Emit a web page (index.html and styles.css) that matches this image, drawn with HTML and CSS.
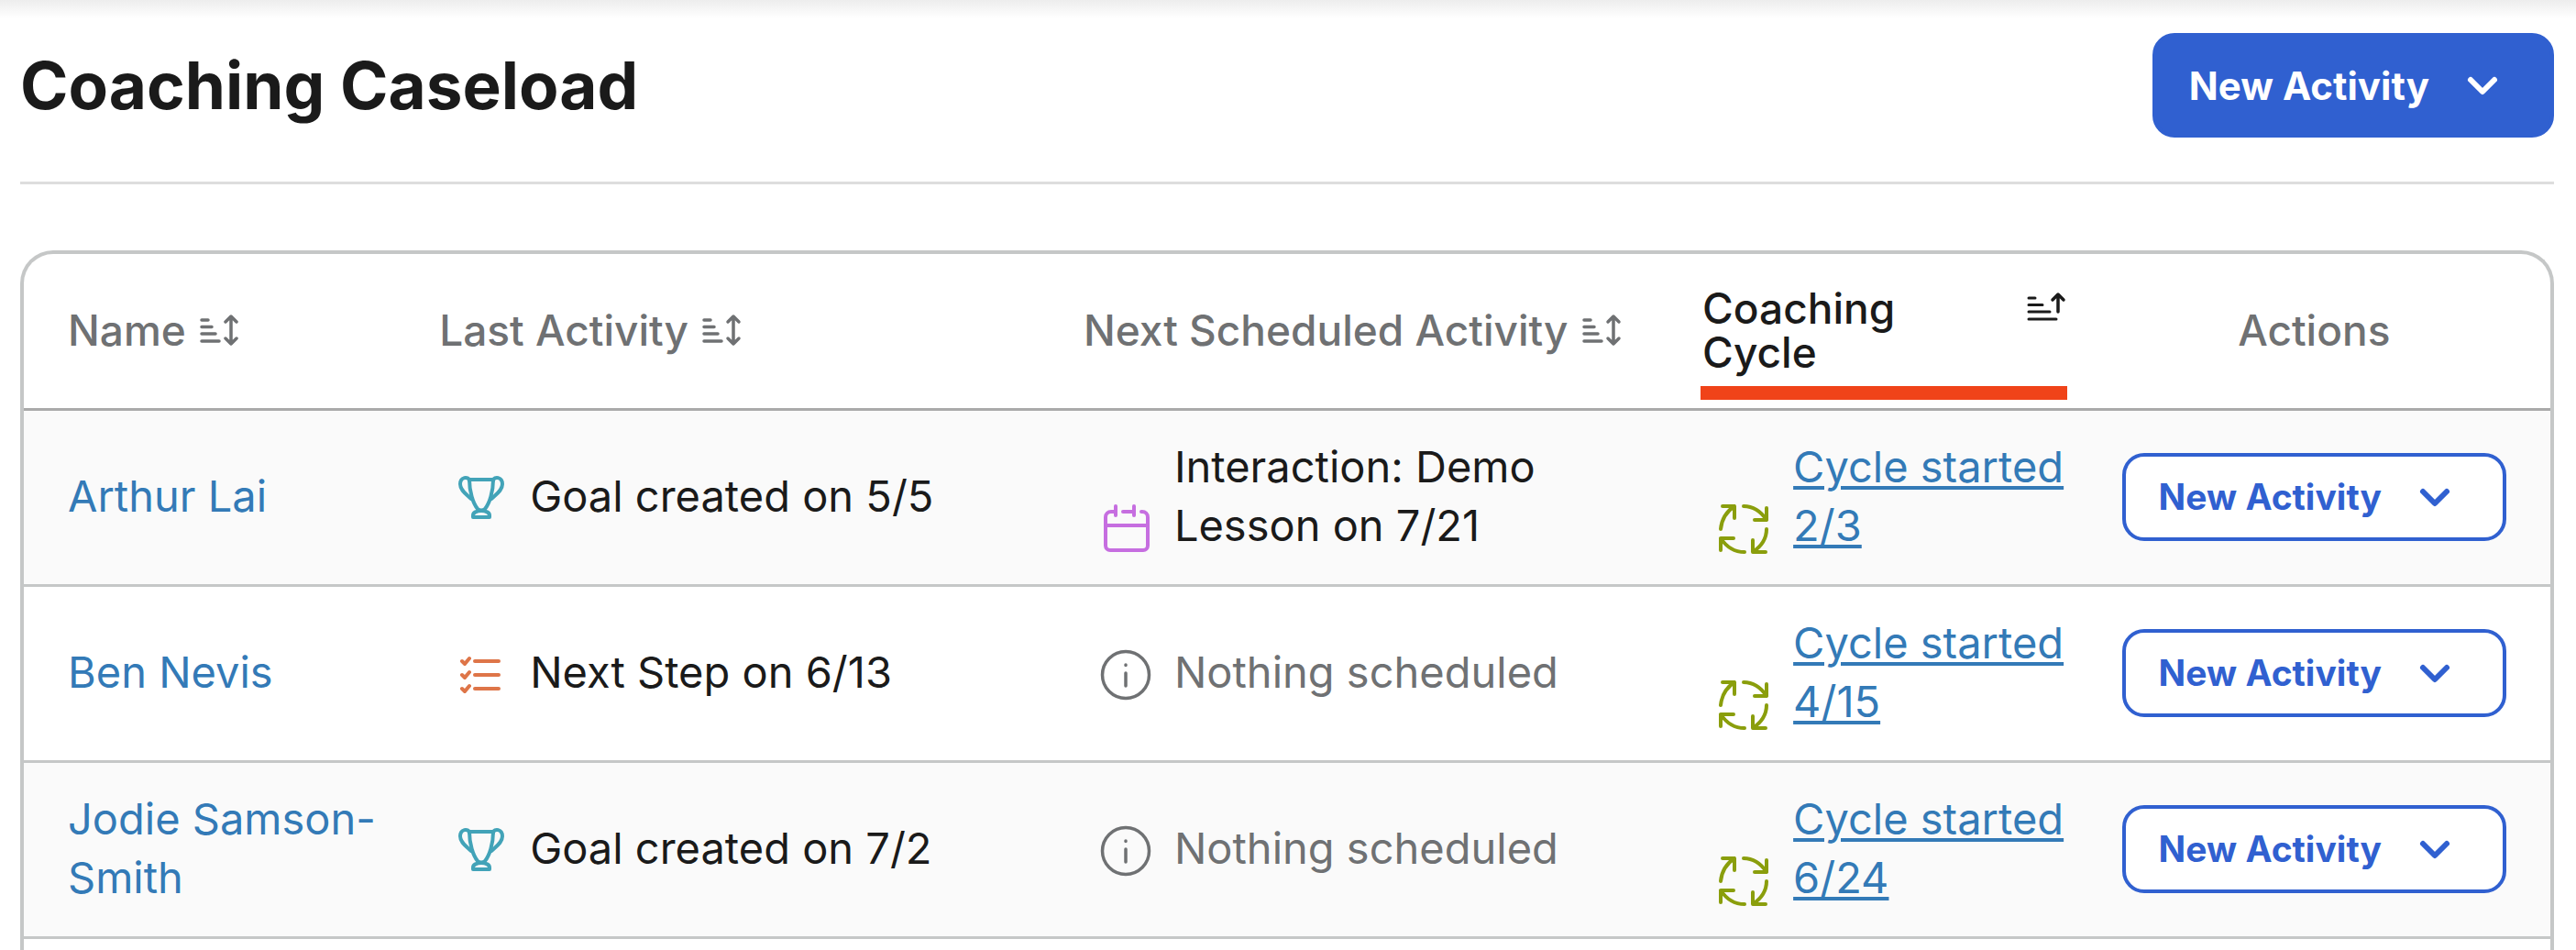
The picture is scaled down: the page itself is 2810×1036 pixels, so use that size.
FILE: index.html
```html
<!DOCTYPE html>
<html lang="en">
<head>
  <meta charset="UTF-8" />
  <meta name="viewport" content="width=device-width, initial-scale=1.0"/>
  <title>Coaching Caseload</title>
  <link rel="stylesheet" href="styles.css">
</head>
<body>

  <!-- shared icons -->
  <svg class="sprite" aria-hidden="true">
    <symbol id="chevron" viewBox="0 0 48 48">
      <path d="M11 18l13 13 13-13" stroke-width="6"/>
    </symbol>
    <symbol id="sort" viewBox="0 0 44 48">
      <path d="M3 13h7M3 20.500h11M3 28h15M3 36h19" stroke-width="3.500"/>
      <path d="M35 9v30M29 15l6-6 6 6M29 33l6 6 6-6" stroke-width="3.500"/>
    </symbol>
    <symbol id="sort-asc" viewBox="0 0 44 48">
      <path d="M2 13h7M2 20.500h15M2 28h23M2 36h30" stroke-width="3"/>
      <path d="M34 10v18M28 15l6-6 6 6" stroke-width="3.500"/>
    </symbol>
    <symbol id="trophy" viewBox="0 0 60 60">
      <path d="M18 10h26c0 13-4 26-9 32q-4 3-8 0c-5-6-9-19-9-32z" stroke-width="4"/>
      <path d="M18 11c-1-5-10-4-10 4 0 7 7 11 12 16M44 11c1-5 10-4 10 4 0 7-7 11-12 16" stroke-width="4"/>
      <path d="M22 51v-2c0-3 4-5 9-5s9 2 9 5v2z" stroke-width="4"/>
    </symbol>
    <symbol id="checklist" viewBox="0 0 60 60">
      <path d="M24 16h26M24 31h26M24 46h26M10 16l3 3 5-6M10 31l3 3 5-6M10 46l3 3 5-6" stroke-width="4"/>
    </symbol>
    <symbol id="calendar" viewBox="0 0 60 60">
      <path d="M20 7v10M40 7v10M28 13h11M18 13h-3a6 6 0 0 0-6 6v31a5 5 0 0 0 5 5h36a5 5 0 0 0 5-5v-31a6 6 0 0 0-6-6h-1M9 28h46" stroke-width="4"/>
    </symbol>
    <symbol id="info" viewBox="0 0 60 60">
      <circle cx="31" cy="31" r="25.500" stroke-width="3.500"/>
      <path d="M31 29v14M31 20v.5" stroke-width="3.500"/>
    </symbol>
    <symbol id="cycle" viewBox="0 0 60 60">
      <path d="M7 7h13v13M5 32C6 22 11 13 20 7" stroke-width="4"/>
      <path d="M55 9v13H42M30 7c10 0 19 6 25 15" stroke-width="4"/>
      <path d="M40 44v13h14M55 32c0 10-6 19-15 25" stroke-width="4"/>
      <path d="M19 42H5v13M31 57C20 57 11 51 5 42" stroke-width="4"/>
    </symbol>
  </svg>

  <header class="page-header">
    <h1>Coaching Caseload</h1>
    <button class="btn btn-primary">New Activity <svg class="chevron"><use href="#chevron"/></svg></button>
  </header>

  <main class="card">
    <table>
      <colgroup>
        <col class="col-name">
        <col class="col-last">
        <col class="col-next">
        <col class="col-cycle">
        <col class="col-actions">
      </colgroup>
      <thead>
        <tr>
          <th><button class="sort">Name <svg><use href="#sort"/></svg></button></th>
          <th><button class="sort">Last Activity <svg><use href="#sort"/></svg></button></th>
          <th><button class="sort">Next Scheduled Activity <svg><use href="#sort"/></svg></button></th>
          <th class="marked"><button class="sort sorted">Coaching Cycle <svg><use href="#sort-asc"/></svg></button></th>
          <th class="actions">Actions</th>
        </tr>
      </thead>
      <tbody>
        <tr>
          <td><a href="#">Arthur Lai</a></td>
          <td><div class="activity"><svg class="teal"><use href="#trophy"/></svg><span>Goal created on 5/5</span></div></td>
          <td><div class="activity"><svg class="purple"><use href="#calendar"/></svg><span>Interaction: Demo Lesson on 7/21</span></div></td>
          <td><div class="activity"><svg class="green"><use href="#cycle"/></svg><a class="cycle-link" href="#">Cycle started 2/3</a></div></td>
          <td class="actions"><button class="btn btn-outline">New Activity <svg class="chevron"><use href="#chevron"/></svg></button></td>
        </tr>
        <tr>
          <td><a href="#">Ben Nevis</a></td>
          <td><div class="activity"><svg class="orange"><use href="#checklist"/></svg><span>Next Step on 6/13</span></div></td>
          <td><div class="activity none"><svg><use href="#info"/></svg><span>Nothing scheduled</span></div></td>
          <td><div class="activity"><svg class="green"><use href="#cycle"/></svg><a class="cycle-link" href="#">Cycle started 4/15</a></div></td>
          <td class="actions"><button class="btn btn-outline">New Activity <svg class="chevron"><use href="#chevron"/></svg></button></td>
        </tr>
        <tr>
          <td><a href="#">Jodie Samson-Smith</a></td>
          <td><div class="activity"><svg class="teal"><use href="#trophy"/></svg><span>Goal created on 7/2</span></div></td>
          <td><div class="activity none"><svg><use href="#info"/></svg><span>Nothing scheduled</span></div></td>
          <td><div class="activity"><svg class="green"><use href="#cycle"/></svg><a class="cycle-link" href="#">Cycle started 6/24</a></div></td>
          <td class="actions"><button class="btn btn-outline">New Activity <svg class="chevron"><use href="#chevron"/></svg></button></td>
        </tr>
      </tbody>
    </table>
  </main>

</body>
</html>
```

FILE: styles.css
```css
* {
  box-sizing: border-box;
}

body {
  display: flex;
  flex-direction: column;
  min-height: 100vh;
  margin: 0;
  padding: 0 24px 0 22px;
  font-family: Inter, "Liberation Sans", sans-serif;
  color: #1a1a1a;
  background: #fff linear-gradient(#ededed, #fff) 0 0 / 100% 20px no-repeat;
}

svg {
  flex-shrink: 0;
  fill: none;
  stroke: currentColor;
  stroke-linecap: round;
  stroke-linejoin: round;
}

.sprite {
  display: none;
}

.page-header {
  display: flex;
  justify-content: space-between;
  align-items: center;
  padding: 36px 0 48px;
  border-bottom: 3px solid #dddddd;
}

h1 {
  margin: 0;
  font-size: 71px;
  font-weight: 700;
}

/* buttons */
.btn {
  display: flex;
  justify-content: space-between;
  align-items: center;
  gap: 34px;
  border: 4px solid #3060d0;
  border-radius: 24px;
  padding: 0 50px 0 36px;
  font-family: inherit;
  font-weight: 700;
  white-space: nowrap;
  cursor: pointer;
}

.btn-primary {
  height: 114px;
  font-size: 42px;
  color: #fff;
  background: #3060d0;
}

.btn-outline {
  width: 100%;
  height: 96px;
  font-size: 39px;
  color: #3060d0;
  background: #fff;
}

.chevron {
  width: 48px;
  height: 48px;
}

/* table */
.card {
  flex: 1;
  margin-top: 72px;
  border: 4px solid #c5c7c7;
  border-bottom: 0;
  border-radius: 36px 36px 0 0;
}

table {
  width: 100%;
  table-layout: fixed;
  border-collapse: separate;
  border-spacing: 0;
}

.col-name { width: 14.7%; }
.col-last { width: 25.5%; }
.col-next { width: 24.5%; }
.col-cycle { width: 16.6%; }
.col-actions { width: 18.7%; }

th {
  padding: 35px 12px 37px 48px;
  border-bottom: 3px solid #aaaaaa;
  font-size: 46px;
  font-weight: 500;
  line-height: 48px;
  text-align: left;
  color: #6f7173;
}

td {
  padding: 29px 12px 32px 48px;
  border-bottom: 3px solid #c5c7c7;
  font-size: 47px;
  line-height: 64px;
}

tbody tr:nth-child(odd) {
  background: #fafafa;
}

th.actions,
td.actions {
  padding-left: 48px;
  padding-right: 48px;
  text-align: center;
}

td.actions {
  padding-top: 0;
  padding-bottom: 2px;
}

.sort {
  display: flex;
  align-items: flex-start;
  gap: 14px;
  padding: 0;
  border: 0;
  background: none;
  font: inherit;
  text-align: left;
  color: inherit;
  cursor: pointer;
}

.sort svg {
  width: 44px;
  height: 48px;
}

.sorted {
  justify-content: space-between;
  width: 100%;
  color: #1a1a1a;
}

/* highlight bar under the sorted column */
.marked {
  position: relative;
}

.marked::after {
  content: "";
  position: absolute;
  left: 46px;
  right: 12px;
  bottom: 9px;
  height: 15px;
  background: #f04319;
}

a {
  color: #337ab7;
  text-decoration: none;
}

.activity {
  display: flex;
  align-items: flex-end;
  gap: 24px;
  padding-left: 15px;
}

.activity svg {
  width: 60px;
  height: 60px;
}

.cycle-link {
  text-decoration: underline;
  text-decoration-thickness: 4px;
  text-underline-offset: 4px;
}

.none { color: #6f7173; }
.teal { color: #42a3b8; }
.orange { color: #de7548; }
.purple { color: #c66ee0; }
.green { color: #8a9e0c; }
```
